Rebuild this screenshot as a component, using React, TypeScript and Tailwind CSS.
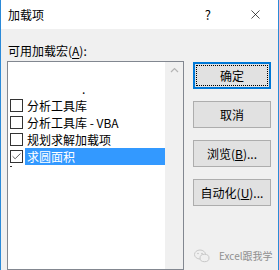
import { Check, X } from 'lucide-react';

const FONT = '"Noto Sans CJK SC", "Liberation Sans", sans-serif';

const ITEMS = [
  { name: '分析工具库', checked: false },
  { name: '分析工具库 - VBA', checked: false },
  { name: '规划求解加载项', checked: false },
  { name: '求圆面积', checked: true },
];

function CheckBox({ checked }: { checked: boolean }) {
  return (
    <div className="w-[13px] h-[13px] border border-[#333333] bg-white flex items-center justify-center shrink-0">
      {checked && <Check size={11} strokeWidth={1.6} className="text-[#222222]" />}
    </div>
  );
}

function Btn({ label, def }: { label: React.ReactNode; def?: boolean }) {
  return (
    <div
      className={`relative h-[27px] w-[78px] flex items-center justify-center text-[12px] text-black bg-[#e1e1e1] ${
        def ? 'border-2 border-[#0078d7]' : 'border border-[#adadad]'
      }`}
    >
      {def && <div className="absolute inset-[1px] border border-dotted border-black" />}
      <span className="relative">{label}</span>
    </div>
  );
}

export default function App() {
  return (
    <div
      className="relative w-[279px] h-[270px] overflow-hidden bg-[#f0f0f0] border-l border-r border-[#2b8ad8] flex flex-col"
      style={{ fontFamily: FONT }}
    >
      {/* Barra de título */}
      <div className="h-[29px] bg-white flex items-center pl-[7px] shrink-0">
        <span className="text-[12px] text-black">加载项</span>
        <span className="ml-auto text-[13px] text-black mr-[37px]">?</span>
        <X size={15} strokeWidth={1.1} className="text-black mr-[15px]" />
      </div>

      {/* Etiqueta */}
      <div className="pl-[7px] pt-[14px] h-[32px] text-[12px] leading-[16px] text-black shrink-0">
        可用加载宏(<span className="underline underline-offset-2">A</span>):
      </div>

      {/* Cuerpo */}
      <div className="flex flex-1 pl-[6px] min-h-0">
        <div className="w-[177px] border border-[#828790] bg-white flex min-h-0">
          <div className="flex-1 flex flex-col pt-[18px] pl-[2px]">
            <div className="h-[17px] text-[12px] leading-[17px] pl-[72px] text-black">.</div>
            {ITEMS.map((it) => (
              <div key={it.name} className="h-[17px] flex items-center">
                <CheckBox checked={it.checked} />
                <span
                  className={`ml-[2px] pl-[2px] h-[17px] leading-[17px] text-[12px] ${
                    it.checked ? 'bg-[#3399ff] text-white flex-1' : 'text-black'
                  }`}
                >
                  {it.name}
                </span>
              </div>
            ))}
            <div className="mt-[1px] w-[2px] h-[1px] bg-[#333333]" />
          </div>
          <div className="w-[18px] bg-[#f0f0f0] flex justify-center pt-[5px]">
            <svg width="9" height="6" viewBox="0 0 9 6">
              <path d="M1 5 L4.5 1.5 L8 5" stroke="#b5b5b5" strokeWidth="1.2" fill="none" />
            </svg>
          </div>
        </div>

        <div className="ml-[9px] pt-[1px] flex flex-col gap-[12px]">
          <Btn label="确定" def />
          <Btn label="取消" />
          <Btn label={<>浏览(<span className="underline">B</span>)...</>} />
          <Btn label={<>自动化(<span className="underline">U</span>)...</>} />
        </div>
      </div>

      {/* Marca de agua */}
      <div className="absolute left-[193px] top-[249px] flex items-center gap-[9px]">
        <svg width="16" height="14" viewBox="0 0 16 14">
          <ellipse cx="6" cy="5.5" rx="5.5" ry="4.5" fill="none" stroke="#c8c8c8" strokeWidth="1" />
          <ellipse cx="10.5" cy="9" rx="4.5" ry="3.7" fill="#f0f0f0" stroke="#c8c8c8" strokeWidth="1" />
          <circle cx="4" cy="4.5" r="0.7" fill="#bbbbbb" />
          <circle cx="8" cy="4.5" r="0.7" fill="#bbbbbb" />
        </svg>
        <span className="text-[10px] text-[#8f8f8f] leading-[14px]">Excel跟我学</span>
      </div>
    </div>
  );
}
